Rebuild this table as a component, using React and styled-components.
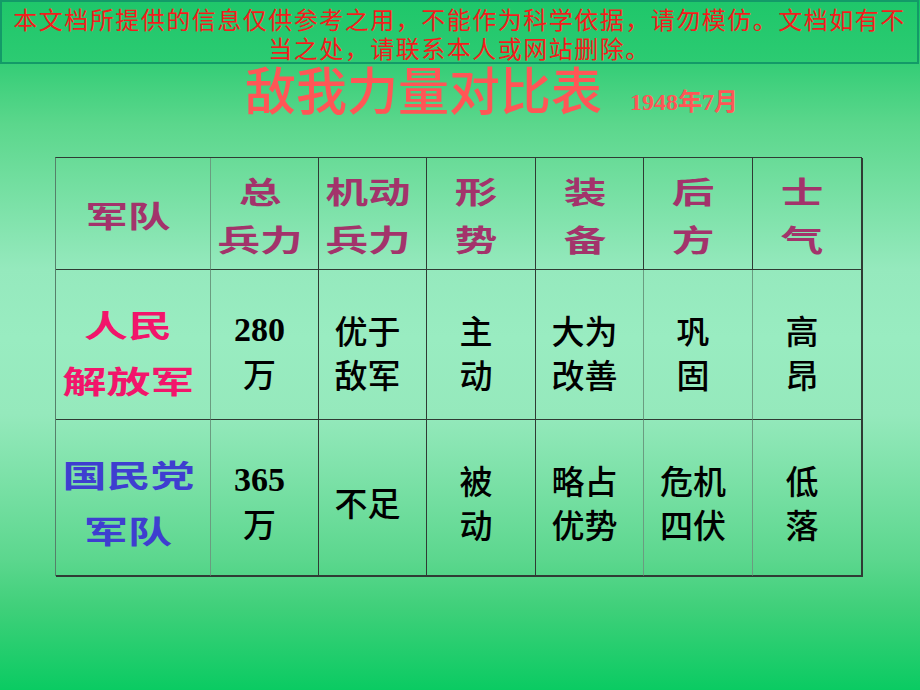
import React from 'react';
import styled, { createGlobalStyle } from 'styled-components';

const Global = createGlobalStyle`
  html, body { margin: 0; padding: 0; }
  body {
    width: 920px;
    height: 690px;
    overflow: hidden;
    font-family: "Noto Sans CJK SC", "Noto Sans", sans-serif;
  }
`;

const Page = styled.div`
  width: 920px;
  height: 690px;
  display: flex;
  flex-direction: column;
  background: linear-gradient(
    to bottom,
    #0cc863 0%,
    #34cd76 9%,
    #5bd78c 18%,
    #95e9bd 39%,
    #99ecc1 49%,
    #95e9bc 60%,
    #5cd78e 81%,
    #40d07a 88%,
    #0acb62 100%
  );
`;

const Banner = styled.div`
  box-sizing: border-box;
  width: 919px;
  height: 64px;
  padding-top: 2px;
  border: 2px solid #139a68;
  background: linear-gradient(to bottom, #1fc76a, #2ccb72);
  color: #f41c1c;
  font-family: "Noto Sans CJK SC", sans-serif;
  font-size: 24px;
  line-height: 29px;
  letter-spacing: 1.5px;
  text-align: center;
  white-space: nowrap;
`;

const BannerLine = styled.div`
  display: block;
`;

const TitleRow = styled.div`
  display: flex;
  align-items: baseline;
  padding-left: 245px;
  height: 48px;
`;

const Title = styled.h1`
  margin: 0;
  font-family: "Noto Sans CJK SC", sans-serif;
  font-weight: 500;
  font-size: 51px;
  line-height: 48px;
  color: #ff5656;
`;

const DateText = styled.span`
  margin-left: 28px;
  font-family: "Liberation Serif", "Noto Sans CJK SC", serif;
  font-weight: 700;
  font-size: 24px;
  line-height: 24px;
  color: #ff5656;
`;

const Grid = styled.div`
  margin-top: 45px;
  margin-left: 55px;
  display: grid;
  grid-template-columns: 155px 108px 108px 109px 108px 109px 109px;
  grid-template-rows: 112px 150px 156px;
  width: max-content;
  border-top: 1px solid #2f3b34;
  border-left: 1px solid #55806a;
  box-shadow: 1px 1px 0 #2f3b34;
`;

const Cell = styled.div`
  box-sizing: border-box;
  border-right: 1px solid ${(p) => (p.$soft ? '#6a9c80' : '#2f3b34')};
  border-bottom: 1px solid #2f3b34;
  display: flex;
  flex-direction: column;
  align-items: center;
  justify-content: center;
  padding-top: ${(p) => p.$pt || 0}px;
  padding-right: 10px;
`;

const Calli = styled.span`
  display: block;
  font-family: "Noto Sans CJK SC", sans-serif;
  font-weight: 700;
  font-size: ${(p) => p.$size || 30}px;
  line-height: ${(p) => p.$lh || 48}px;
  color: ${(p) => p.$color};
  transform: scaleX(1.42);
  white-space: nowrap;
`;

const Body = styled.span`
  display: block;
  font-family: "Noto Sans CJK SC", sans-serif;
  font-weight: 500;
  font-size: 33px;
  line-height: 44px;
  color: #000;
  white-space: nowrap;
`;

const Num = styled.span`
  display: block;
  font-family: "Liberation Serif", serif;
  font-weight: 700;
  font-size: 34px;
  line-height: 42px;
  color: #000;
`;

const HEAD = '#a3336b';
const RED = '#f2156b';
const BLUE = '#3e3ed0';

const headers = [
  ['军队'],
  ['总', '兵力'],
  ['机动', '兵力'],
  ['形', '势'],
  ['装', '备'],
  ['后', '方'],
  ['士', '气'],
];

const rows = [
  {
    label: ['人民', '解放军'],
    color: RED,
    num: '280',
    cells: [['优于', '敌军'], ['主', '动'], ['大为', '改善'], ['巩', '固'], ['高', '昂']],
    pt: 14,
  },
  {
    label: ['国民党', '军队'],
    color: BLUE,
    num: '365',
    cells: [['不足'], ['被', '动'], ['略占', '优势'], ['危机', '四伏'], ['低', '落']],
    pt: 8,
  },
];

export default function App() {
  return (
    <Page>
      <Global />
      <Banner>
        <BannerLine>本文档所提供的信息仅供参考之用，不能作为科学依据，请勿模仿。文档如有不</BannerLine>
        <BannerLine>当之处，请联系本人或网站删除。</BannerLine>
      </Banner>
      <TitleRow>
        <Title>敌我力量对比表</Title>
        <DateText>1948年7月</DateText>
      </TitleRow>
      <Grid>
        {headers.map((h, i) => (
          <Cell key={'h' + i} $soft={i === 0} $pt={0}>
            {h.map((t) => (
              <Calli key={t} $color={HEAD} $size={30} $lh={48}>
                {t}
              </Calli>
            ))}
          </Cell>
        ))}
        {rows.map((r, ri) => (
          <React.Fragment key={'r' + ri}>
            <Cell $soft $pt={r.pt}>
              {r.label.map((t) => (
                <Calli key={t} $color={r.color} $size={31} $lh={56}>
                  {t}
                </Calli>
              ))}
            </Cell>
            <Cell $pt={r.pt}>
              <Num>{r.num}</Num>
              <Body>万</Body>
            </Cell>
            {r.cells.map((c, ci) => (
              <Cell key={ci} $soft={ci === 2 || ci === 3} $pt={r.pt}>
                {c.map((t) => (
                  <Body key={t}>{t}</Body>
                ))}
              </Cell>
            ))}
          </React.Fragment>
        ))}
      </Grid>
    </Page>
  );
}
